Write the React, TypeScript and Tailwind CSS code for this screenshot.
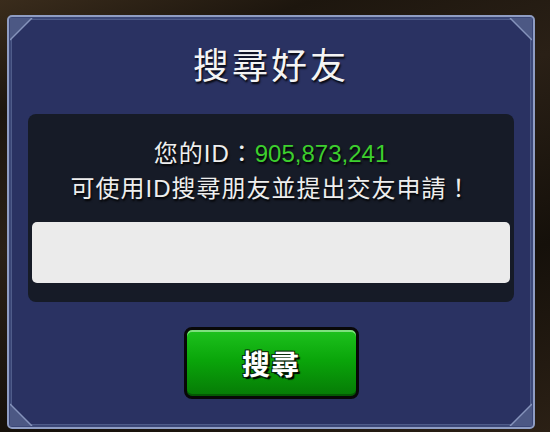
const FONT = "font-['Noto_Sans_CJK_TC','Noto_Sans',sans-serif]";
const SHADOW = "[text-shadow:1px_2px_2px_rgba(0,0,0,0.9)]";
const LATIN = "font-['Liberation_Sans',sans-serif] leading-none";

function Corner({ className, points, edge }: { className: string; points: string; edge: string }) {
  return (
    <svg className={`absolute h-[24px] w-[24px] ${className}`} viewBox="0 0 24 24">
      <polygon points={points} fill="#4c5884" />
      <path d={edge} stroke="#8593bb" strokeWidth={1.5} fill="none" />
    </svg>
  );
}

export default function App() {
  return (
    <div
      className={`h-[432px] w-[550px] overflow-hidden bg-[linear-gradient(160deg,#3a2c1c_0%,#1d160e_18%,#2a2016_40%,#15100a_70%,#2b2015_100%)] pl-[7px] pt-[15px] ${FONT}`}
    >
      {/* Panel */}
      <div className="relative flex h-[414px] w-[528px] flex-col items-center rounded-[5px] border-2 border-[#8f9dc3] bg-[#2a3262] shadow-[inset_0_0_0_2px_#3b4777,inset_0_0_0_3px_#4f5c8a]">
        <Corner className="left-[1px] top-[1px]" points="0,0 22,0 0,22" edge="M22,0 L0,22" />
        <Corner className="right-[1px] top-[1px]" points="2,0 24,0 24,22" edge="M2,0 L24,22" />
        <Corner className="bottom-[1px] left-[1px]" points="0,2 0,24 22,24" edge="M0,2 L22,24" />
        <Corner className="bottom-[1px] right-[1px]" points="24,2 24,24 2,24" edge="M24,2 L2,24" />

        {/* Title */}
        <h1 className={`mt-[28px] text-[36px] leading-[36px] tracking-[3px] text-[#f4f4f4] ${SHADOW}`}>
          搜尋好友
        </h1>

        {/* Info box */}
        <div className="mt-[33px] flex w-[486px] flex-col items-center rounded-[8px] bg-[#161b27] px-[4px] pb-[19px] pt-[20px]">
          <p className={`h-[35px] text-[24px] leading-[35px] tracking-[1px] text-[#eeeeee] ${SHADOW}`}>
            您的<span className={LATIN}>ID</span>：
            <span className={`${LATIN} tracking-normal text-[#3dcf2e]`}>905,873,241</span>
          </p>
          <p className={`h-[35px] text-[24px] leading-[35px] tracking-[1px] text-[#eeeeee] ${SHADOW}`}>
            可使用<span className={LATIN}>ID</span>搜尋朋友並提出交友申請！
          </p>
          <input
            type="text"
            className="mt-[18px] h-[61px] w-full rounded-[5px] bg-[#ebebeb] px-3 text-[22px] text-[#222] outline-none"
          />
        </div>

        {/* Search button */}
        <button className="mt-[25px] flex h-[72px] w-[175px] items-center justify-center rounded-[8px] border-[3px] border-[#080808] bg-[linear-gradient(180deg,#1ec21e_0%,#0aa60a_45%,#067a06_100%)] shadow-[inset_0_2px_0_#7ee07e,inset_0_-2px_0_#045804]">
          <span className="text-[28px] font-bold leading-none tracking-[1px] text-white [text-shadow:-1px_-1px_0_#0b2b0b,1px_-1px_0_#0b2b0b,-1px_1px_0_#0b2b0b,2px_2px_1px_#000]">
            搜尋
          </span>
        </button>
      </div>
    </div>
  );
}
